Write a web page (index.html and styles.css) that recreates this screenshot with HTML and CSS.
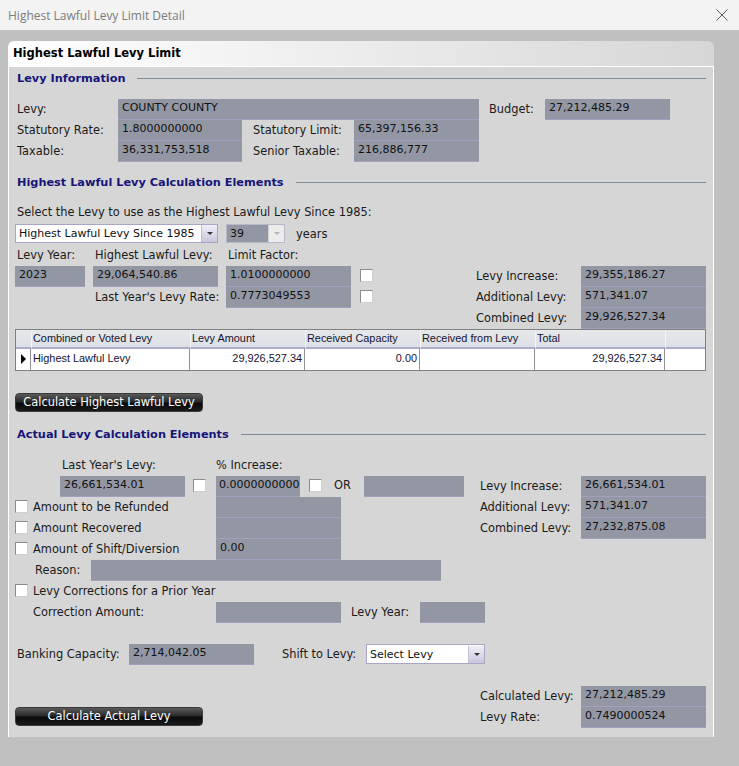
FILE: index.html
```html
<!DOCTYPE html>
<html>
<head>
<meta charset="utf-8">
<link rel="stylesheet" href="styles.css">
</head>
<body>
<div class="titlebar">
  <span class="wtitle">Highest Lawful Levy Limit Detail</span>
  <svg class="close" width="12" height="12" viewBox="0 0 12 12"><path d="M0.5 0.5 L11.5 11.5 M11.5 0.5 L0.5 11.5" stroke="#5a5a5a" stroke-width="1" fill="none"/></svg>
</div>
<div class="desk">
  <div class="panel">
    <div class="phead">Highest Lawful Levy Limit</div>
    <div class="pbody">
      <div class="sect s1"><span>Levy Information</span><i></i></div>

      <div class="row r1">
        <span class="lbl w103">Levy:</span>
        <div class="f w361">COUNTY COUNTY</div>
        <span class="lbl w58 ml8">Budget:</span>
        <div class="f w125">27,212,485.29</div>
      </div>
      <div class="row">
        <span class="lbl w103">Statutory Rate:</span>
        <div class="f w124">1.8000000000</div>
        <span class="lbl w103 ml9">Statutory Limit:</span>
        <div class="f w125">65,397,156.33</div>
      </div>
      <div class="row">
        <span class="lbl w103">Taxable:</span>
        <div class="f w124">36,331,753,518</div>
        <span class="lbl w103 ml9">Senior Taxable:</span>
        <div class="f w125">216,886,777</div>
      </div>

      <div class="sect s2"><span>Highest Lawful Levy Calculation Elements</span><i></i></div>
      <div class="line sel">Select the Levy to use as the Highest Lawful Levy Since 1985:</div>
      <div class="ddrow">
        <div class="dd w203"><span>Highest Lawful Levy Since 1985</span><b class="arr"></b></div>
        <div class="dd dis w59 ml8"><span>39</span><b class="arr"></b></div>
        <span class="years">years</span>
      </div>
      <div class="line labs">
        <span class="lb1">Levy Year:</span><span class="lb2">Highest Lawful Levy:</span><span>Limit Factor:</span>
      </div>
      <div class="calc">
        <div class="cleft">
          <div class="row">
            <div class="f w70">2023</div>
            <div class="f w125 ml8">29,064,540.86</div>
            <div class="f w125 ml8">1.0100000000</div>
            <span class="cb ml9"></span>
          </div>
          <div class="row">
            <span class="lbl w133 ml78">Last Year's Levy Rate:</span>
            <div class="f w125">0.7773049553</div>
            <span class="cb ml9"></span>
          </div>
        </div>
        <div class="cright">
          <div class="row"><span class="lbl w107">Levy Increase:</span><div class="f w125">29,355,186.27</div></div>
          <div class="row"><span class="lbl w107">Additional Levy:</span><div class="f w125">571,341.07</div></div>
          <div class="row"><span class="lbl w107">Combined Levy:</span><div class="f w125">29,926,527.34</div></div>
        </div>
      </div>

      <div class="grid">
        <div class="gh sel0"></div>
        <div class="gh">Combined or Voted Levy</div>
        <div class="gh">Levy Amount</div>
        <div class="gh">Received Capacity</div>
        <div class="gh">Received from Levy</div>
        <div class="gh">Total</div>
        <div class="gh"></div>
        <div class="gd sel0"><i class="tri"></i></div>
        <div class="gd">Highest Lawful Levy</div>
        <div class="gd num">29,926,527.34</div>
        <div class="gd num">0.00</div>
        <div class="gd"></div>
        <div class="gd num">29,926,527.34</div>
        <div class="gd last"></div>
      </div>

      <button class="btn b1">Calculate Highest Lawful Levy</button>

      <div class="sect s3"><span>Actual Levy Calculation Elements</span><i></i></div>
      <div class="line labs2"><span class="lb3">Last Year's Levy:</span><span>% Increase:</span></div>
      <div class="calc">
        <div class="cleft">
          <div class="row">
            <div class="f w125 ml45">26,661,534.01</div>
            <span class="cb ml8"></span>
            <div class="f w84 ml10 tight">0.0000000000</div>
            <span class="cb ml9"></span>
            <span class="lbl or">OR</span>
            <div class="f w100">&nbsp;</div>
          </div>
          <div class="row">
            <span class="cb cbl"></span><span class="lbl w185">Amount to be Refunded</span>
            <div class="f w125">&nbsp;</div>
          </div>
          <div class="row">
            <span class="cb cbl"></span><span class="lbl w185">Amount Recovered</span>
            <div class="f w125">&nbsp;</div>
          </div>
        </div>
        <div class="cright">
          <div class="row"><span class="lbl w103">Levy Increase:</span><div class="f w125">26,661,534.01</div></div>
          <div class="row"><span class="lbl w103">Additional Levy:</span><div class="f w125">571,341.07</div></div>
          <div class="row"><span class="lbl w103">Combined Levy:</span><div class="f w125">27,232,875.08</div></div>
        </div>
      </div>
      <div class="row">
        <span class="cb cbl"></span><span class="lbl w185">Amount of Shift/Diversion</span>
        <div class="f w125">0.00</div>
      </div>
      <div class="row">
        <span class="lbl w58 ml18">Reason:</span>
        <div class="f w350">&nbsp;</div>
      </div>
      <div class="row">
        <span class="cb cbl"></span><span class="lbl">Levy Corrections for a Prior Year</span>
      </div>
      <div class="row">
        <span class="lbl w185 ml16">Correction Amount:</span>
        <div class="f w125">&nbsp;</div>
        <span class="lbl w71 ml8">Levy Year:</span>
        <div class="f w65">&nbsp;</div>
      </div>

      <div class="row bank">
        <span class="lbl w114">Banking Capacity:</span>
        <div class="f w125">2,714,042.05</div>
        <span class="lbl w86 ml26">Shift to Levy:</span>
        <div class="dd w119"><span>Select Levy</span><b class="arr"></b></div>
      </div>

      <div class="final">
        <div class="fleft"><button class="btn b2">Calculate Actual Levy</button></div>
        <div class="cright">
          <div class="row"><span class="lbl w103">Calculated Levy:</span><div class="f w125">27,212,485.29</div></div>
          <div class="row"><span class="lbl w103">Levy Rate:</span><div class="f w125">0.7490000524</div></div>
        </div>
      </div>
    </div>
  </div>
</div>
</body>
</html>
```
FILE: styles.css
```css
* { box-sizing: border-box; }
html, body { margin: 0; padding: 0; }
body {
  background: #c0c0c0;
  font-family: "DejaVu Sans", Verdana, sans-serif;
  font-size: 11.4px;
  color: #1a1a1a;
  width: 739px;
  height: 766px;
  overflow: hidden;
}
.titlebar {
  height: 30px;
  background: #f3f3f3;
  display: flex;
  align-items: center;
  padding-left: 8px;
  position: relative;
}
.wtitle {
  font-family: "Open Sans", "Noto Sans", sans-serif;
  font-size: 12px;
  color: #7c7c7c;
}
.close { margin-left: auto; margin-right: 11px; }
.desk { padding: 11px 25px 0 8px; }
.panel { width: 706px; }
.phead {
  height: 25px;
  border-radius: 6px 6px 0 0;
  background: linear-gradient(to right, #ffffff 0%, #f0f0f0 40%, #d6d6d6 100%);
  font-weight: bold;
  font-size: 11.5px;
  color: #000;
  line-height: 25px;
  padding-left: 5px;
}
.pbody {
  background: #d6d6d6;
  border: 1px solid #ffffff;
  border-bottom: none;
  height: 671px;
  padding: 0 7px 0 6px;
}
.sect {
  display: flex;
  align-items: center;
  height: 14px;
  font-weight: bold;
  font-size: 11.3px;
  color: #15157a;
  padding-left: 2px;
}
.sect i { flex: 1; height: 1px; background: #7d8a99; margin-left: 12px; }
.s1 { margin-top: 4px; margin-bottom: 14px; }
.s2 { margin-top: 13px; }
.s3 { margin-top: 15px; }
.row { display: flex; align-items: flex-start; height: 21px; }
.lbl { line-height: 17px; padding-top: 2px; white-space: nowrap; padding-left: 2px; flex: none; }
.f {
  flex: none;
  height: 21px;
  background: #9397a3;
  border-bottom: 1px solid #a49fbe;
  padding: 2px 4px 0 4px;
  line-height: 14px;
  font-size: 11px;
  color: #111;
  white-space: nowrap;
  overflow: hidden;
}
.f.tight { padding-left: 3px; padding-right: 0; }
.w56 { width: 56px; } .w58 { width: 58px; } .w59 { width: 59px; } .w65 { width: 65px; }
.w70 { width: 70px; } .w71 { width: 71px; } .w84 { width: 84px; } .w86 { width: 86px; }
.w100 { width: 100px; } .w101 { width: 101px; } .w103 { width: 103px; } .w105 { width: 105px; }
.w107 { width: 107px; }
.w114 { width: 114px; } .w119 { width: 119px; } .w124 { width: 124px; } .w125 { width: 125px; }
.w131 { width: 131px; } .w133 { width: 133px; } .w185 { width: 185px; } .w203 { width: 203px; }
.w350 { width: 350px; } .w361 { width: 361px; }
.ml8 { margin-left: 8px; } .ml9 { margin-left: 9px; } .ml10 { margin-left: 10px; } .ml11 { margin-left: 11px; }
.ml16 { margin-left: 16px; } .ml18 { margin-left: 18px; } .ml26 { margin-left: 26px; }
.ml45 { margin-left: 45px; } .ml78 { margin-left: 78px; }
.line { height: 14px; line-height: 14px; white-space: nowrap; padding-left: 2px; }
.sel { margin-top: 16px; }
.ddrow { display: flex; align-items: center; height: 19px; margin-top: 5px; }
.dd {
  flex: none;
  height: 19px;
  background: #fff;
  border: 1px solid #aaa5c6;
  display: flex;
  align-items: center;
  padding-left: 3px;
  position: relative;
  color: #111;
  font-size: 11px;
}
.dd span { flex: 1; white-space: nowrap; overflow: hidden; }
.dd .arr {
  width: 16px;
  height: 17px;
  background: linear-gradient(#f0eff6, #c9c6dc);
  border-left: 1px solid #c0bcd6;
  position: relative;
  flex: none;
}
.dd .arr::after {
  content: "";
  position: absolute;
  left: 5px; top: 7px;
  border-left: 3px solid transparent;
  border-right: 3px solid transparent;
  border-top: 3px solid #333;
}
.dd.dis { background: #9397a3; border-color: #b8b8c8; }
.dd.dis .arr { background: #ececec; border-left-color: #d0d0d0; }
.dd.dis .arr::after { border-top-color: #b5b5b5; }
.years { margin-left: 11px; }
.labs { margin-top: 5px; margin-bottom: 4px; }
.lb1 { display: inline-block; width: 78px; }
.lb2 { display: inline-block; width: 133px; }
.calc { display: flex; }
.cleft { flex: none; }
.cright { margin-left: auto; flex: none; }
.cb {
  flex: none;
  width: 13px;
  height: 13px;
  background: #fff;
  border: 1px solid #8c8c8c;
  border-right-color: #cfcfcf;
  border-bottom-color: #cfcfcf;
  margin-top: 3px;
}
.cbl { margin-right: 3px; }
.or { width: 42px; padding-left: 12px; padding-top: 1px; }
.grid {
  display: grid;
  grid-template-columns: 15px 159px 115px 115px 115px 130px 1fr;
  grid-template-rows: 19px 21px;
  border: 1px solid #808080;
  background: #fff;
  font-family: "Liberation Sans", Arial, sans-serif;
  font-size: 10.9px;
  color: #141432;
}
.gh {
  background: linear-gradient(#e6e9ec, #dcdfe3);
  border-bottom: 2px solid #aeacca;
  border-left: 1px solid #f4f4f4;
  padding-left: 1px;
  line-height: 17px;
  white-space: nowrap;
}
.gh.sel0 { border-left: none; }
.gd {
  border-right: 1px solid #8f8f8f;
  line-height: 19px;
  padding: 0 2px;
  white-space: nowrap;
}
.gd.last { border-right: none; }
.gd.num { text-align: right; }
.gd.sel0 { position: relative; }
.tri {
  position: absolute;
  left: 5px; top: 5px;
  border-top: 5px solid transparent;
  border-bottom: 5px solid transparent;
  border-left: 5px solid #000;
}
.btn {
  display: block;
  width: 188px;
  height: 19px;
  border: 1px solid #3a3a3a;
  border-radius: 4px;
  background: linear-gradient(#5a5a5a 0%, #2a2a2a 45%, #0a0a0a 55%, #1a1a1a 100%);
  color: #fff;
  font-family: "DejaVu Sans", Verdana, sans-serif;
  font-size: 11.4px;
  padding: 0;
  line-height: 17px;
  text-align: center;
}
.b1 { margin-top: 22px; }
.labs2 { margin-top: 17px; margin-bottom: 4px; }
.lb3 { display: inline-block; width: 154px; margin-left: 45px; }
.bank { margin-top: 21px; height: 20px; }
.bank .dd { height: 20px; }
.final { display: flex; margin-top: 22px; }
.fleft { padding-top: 21px; }
```
